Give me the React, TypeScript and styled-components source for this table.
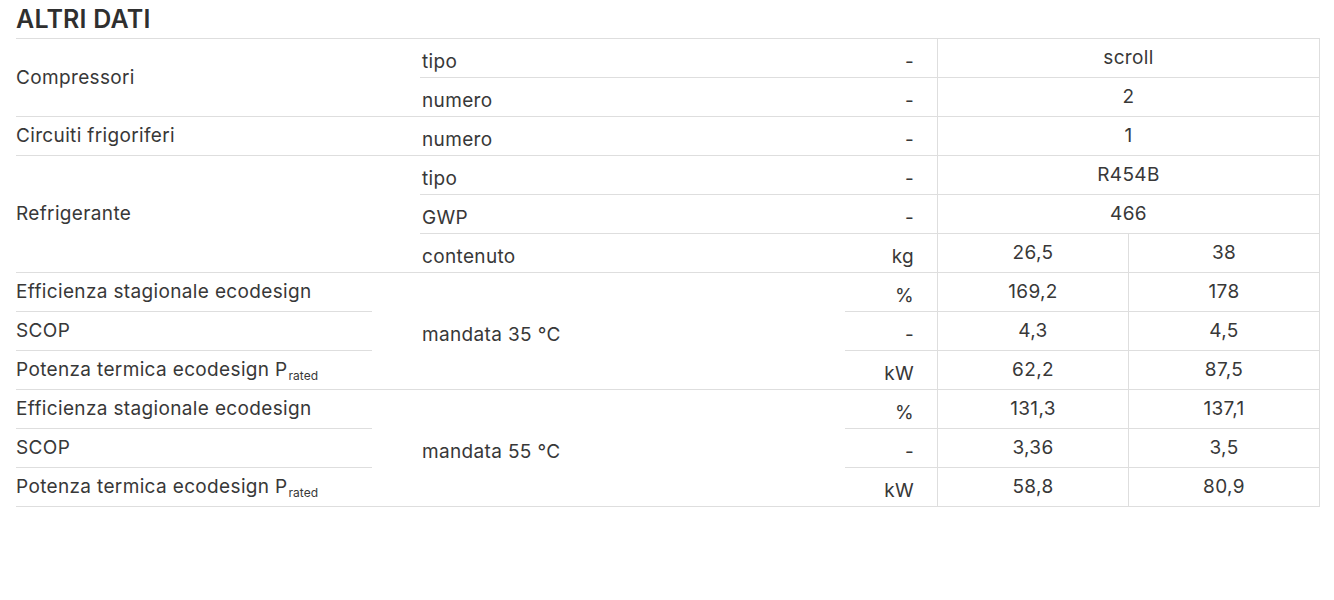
import React from "react";
import styled, { createGlobalStyle } from "styled-components";

const Global = createGlobalStyle`
  html, body { margin: 0; padding: 0; background: #fff; }
  body { font-family: Inter, "Noto Sans", sans-serif; color: #333; }
`;

const Page = styled.div`
  padding: 0 14px 0 16px;
  width: 1304px;
`;

const Title = styled.h2`
  margin: 0;
  height: 38px;
  font-size: 25px;
  font-weight: 600;
  line-height: 38px;
  letter-spacing: 0.2px;
  color: #2f2f2f;
`;

const Table = styled.div`
  display: grid;
  grid-template-columns: 404px 425px 92px 191px 192px;
  grid-auto-rows: 39px;
  border-top: 1px solid #dedede;
  font-size: 19px;
  letter-spacing: 0.35px;
  color: #383838;
`;

type CellProps = {
  $row: string;
  $col: string;
  $kind: "label" | "sub" | "unit" | "value" | "span";
  $short?: boolean;
};

const Cell = styled.div<CellProps>`
  grid-row: ${(p) => p.$row};
  grid-column: ${(p) => p.$col};
  box-sizing: border-box;
  border-bottom: 1px solid #dedede;
  display: flex;
  align-items: center;
  white-space: nowrap;
  margin-right: ${(p) => (p.$short ? "48px" : "0")};
  justify-content: ${(p) =>
    p.$kind === "unit" ? "flex-end" : p.$kind === "value" || p.$kind === "span" ? "center" : "flex-start"};
  padding: ${(p) =>
    p.$kind === "sub"
      ? "7px 0 0 2px"
      : p.$kind === "unit"
      ? "6px 23px 0 0"
      : p.$kind === "label"
      ? "0 0 1px 0"
      : "0 0 1px 0"};
  border-left: ${(p) => (p.$kind === "value" || p.$kind === "span" ? "1px solid #dedede" : "none")};
  border-right: ${(p) => (p.$kind === "span" || p.$col === "5" ? "1px solid #dedede" : "none")};
`;

const Sub = styled.span`
  font-size: 12px;
  letter-spacing: 0;
  position: relative;
  top: 6px;
  margin-left: 1px;
`;

const Prated = () => (
  <>
    Potenza termica ecodesign P<Sub>rated</Sub>
  </>
);

type Row = { sub?: string; unit: string; v1: string; v2?: string };

export default function App() {
  const efficiency = (start: number, temp: string, vals: [string, string][]) => {
    const r = (i: number) => String(start + i);
    return (
      <>
        <Cell $row={r(0)} $col="1" $kind="label" $short>Efficienza stagionale ecodesign</Cell>
        <Cell $row={r(1)} $col="1" $kind="label" $short>SCOP</Cell>
        <Cell $row={r(2)} $col="1" $kind="label"><Prated /></Cell>
        <Cell $row={`${start} / span 3`} $col="2" $kind="sub">{temp}</Cell>
        {["%", "-", "kW"].map((u, i) => (
          <React.Fragment key={u}>
            <Cell $row={r(i)} $col="3" $kind="unit">{u}</Cell>
            <Cell $row={r(i)} $col="4" $kind="value">{vals[i][0]}</Cell>
            <Cell $row={r(i)} $col="5" $kind="value">{vals[i][1]}</Cell>
          </React.Fragment>
        ))}
      </>
    );
  };

  const simple = (row: number, r: Row) => (
    <React.Fragment key={row}>
      <Cell $row={String(row)} $col="2" $kind="sub">{r.sub}</Cell>
      <Cell $row={String(row)} $col="3" $kind="unit">{r.unit}</Cell>
      {r.v2 === undefined ? (
        <Cell $row={String(row)} $col="4 / span 2" $kind="span">{r.v1}</Cell>
      ) : (
        <>
          <Cell $row={String(row)} $col="4" $kind="value">{r.v1}</Cell>
          <Cell $row={String(row)} $col="5" $kind="value">{r.v2}</Cell>
        </>
      )}
    </React.Fragment>
  );

  return (
    <Page>
      <Global />
      <Title>ALTRI DATI</Title>
      <Table>
        <Cell $row="1 / span 2" $col="1" $kind="label">Compressori</Cell>
        {simple(1, { sub: "tipo", unit: "-", v1: "scroll" })}
        {simple(2, { sub: "numero", unit: "-", v1: "2" })}
        <Cell $row="3" $col="1" $kind="label">Circuiti frigoriferi</Cell>
        {simple(3, { sub: "numero", unit: "-", v1: "1" })}
        <Cell $row="4 / span 3" $col="1" $kind="label">Refrigerante</Cell>
        {simple(4, { sub: "tipo", unit: "-", v1: "R454B" })}
        {simple(5, { sub: "GWP", unit: "-", v1: "466" })}
        {simple(6, { sub: "contenuto", unit: "kg", v1: "26,5", v2: "38" })}
        {efficiency(7, "mandata 35 °C", [["169,2", "178"], ["4,3", "4,5"], ["62,2", "87,5"]])}
        {efficiency(10, "mandata 55 °C", [["131,3", "137,1"], ["3,36", "3,5"], ["58,8", "80,9"]])}
      </Table>
    </Page>
  );
}
